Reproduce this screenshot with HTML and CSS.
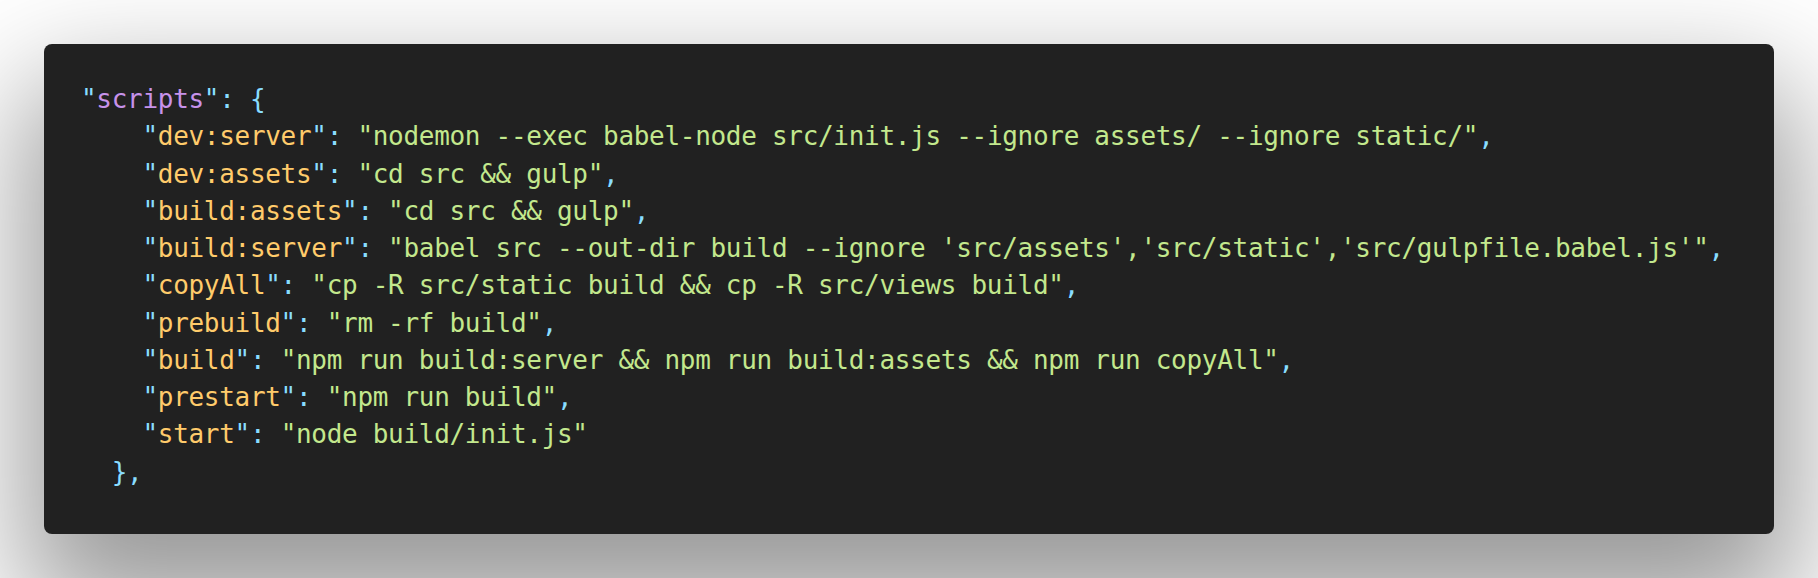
FILE: index.html
```html
<!DOCTYPE html>
<html lang="en">
<head>
<meta charset="utf-8">
<title>package.json scripts</title>
<link rel="stylesheet" href="styles.css">
</head>
<body>
<main class="stage">
<pre class="code"><code><span class="p">"</span><span class="root">scripts</span><span class="p">": {</span>
    <span class="p">"</span><span class="k">dev:server</span><span class="p">": </span><span class="s">"nodemon --exec babel-node src/init.js --ignore assets/ --ignore static/"</span><span class="p">,</span>
    <span class="p">"</span><span class="k">dev:assets</span><span class="p">": </span><span class="s">"cd src &amp;&amp; gulp"</span><span class="p">,</span>
    <span class="p">"</span><span class="k">build:assets</span><span class="p">": </span><span class="s">"cd src &amp;&amp; gulp"</span><span class="p">,</span>
    <span class="p">"</span><span class="k">build:server</span><span class="p">": </span><span class="s">"babel src --out-dir build --ignore 'src/assets','src/static','src/gulpfile.babel.js'"</span><span class="p">,</span>
    <span class="p">"</span><span class="k">copyAll</span><span class="p">": </span><span class="s">"cp -R src/static build &amp;&amp; cp -R src/views build"</span><span class="p">,</span>
    <span class="p">"</span><span class="k">prebuild</span><span class="p">": </span><span class="s">"rm -rf build"</span><span class="p">,</span>
    <span class="p">"</span><span class="k">build</span><span class="p">": </span><span class="s">"npm run build:server &amp;&amp; npm run build:assets &amp;&amp; npm run copyAll"</span><span class="p">,</span>
    <span class="p">"</span><span class="k">prestart</span><span class="p">": </span><span class="s">"npm run build"</span><span class="p">,</span>
    <span class="p">"</span><span class="k">start</span><span class="p">": </span><span class="s">"node build/init.js"</span>
  <span class="p">},</span></code></pre>
</main>
</body>
</html>
```

FILE: styles.css
```css
html, body {
  margin: 0;
  padding: 0;
}

body {
  background: #ffffff;
  width: 1818px;
  height: 578px;
  overflow: hidden;
}

.stage {
  box-sizing: border-box;
  width: 1818px;
  height: 578px;
  padding: 44px;
}

.code {
  box-sizing: border-box;
  margin: 0;
  width: 1730px;
  height: 490px;
  padding: 37px 36px 0 37px;
  background: #212121;
  border-radius: 8px;
  box-shadow: 0 60px 120px 20px rgba(0, 0, 0, 0.4);
  font-family: "DejaVu Sans Mono", "Liberation Mono", monospace;
  font-size: 26px;
  letter-spacing: -0.3px;
  line-height: 37.25px;
  color: #eeffff;
  white-space: pre;
  overflow: hidden;
}

.code code {
  font: inherit;
  letter-spacing: inherit;
}

.p {
  color: #89ddff;
}

.root {
  color: #c792ea;
}

.k {
  color: #ffcb6b;
}

.s {
  color: #c3e88d;
}
```
